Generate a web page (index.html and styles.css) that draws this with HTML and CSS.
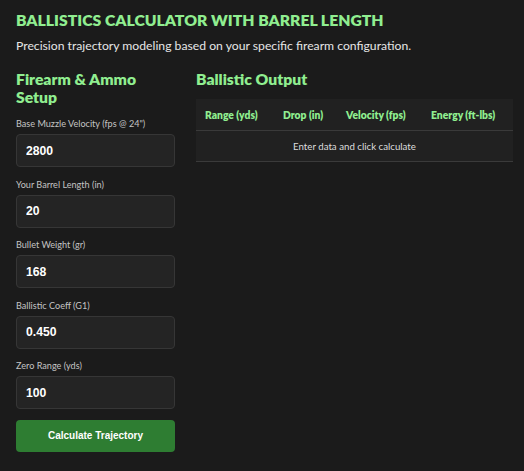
FILE: index.html
```html
<!DOCTYPE html>
<html lang="en">
<head>
<meta charset="UTF-8">
<title>Ballistics Calculator</title>
<link rel="stylesheet" href="styles.css">
</head>
<body>
<h1>BALLISTICS CALCULATOR WITH BARREL LENGTH</h1>
<p class="intro">Precision trajectory modeling based on your specific firearm configuration.</p>
<div class="layout">
<div class="setup">
<h2>Firearm &amp; Ammo Setup</h2>
<form id="calcForm">
<div class="field">
<label for="mv">Base Muzzle Velocity (fps @ 24")</label>
<input type="number" id="mv" value="2800">
</div>
<div class="field">
<label for="barrel">Your Barrel Length (in)</label>
<input type="number" id="barrel" value="20">
</div>
<div class="field">
<label for="weight">Bullet Weight (gr)</label>
<input type="number" id="weight" value="168">
</div>
<div class="field">
<label for="bc">Ballistic Coeff (G1)</label>
<input type="number" id="bc" value="0.450" step="0.001">
</div>
<div class="field">
<label for="zero">Zero Range (yds)</label>
<input type="number" id="zero" value="100">
</div>
<button type="submit">Calculate Trajectory</button>
</form>
</div>
<div class="output">
<h2>Ballistic Output</h2>
<table>
<thead>
<tr>
<th class="c1">Range (yds)</th>
<th class="c2">Drop (in)</th>
<th class="c3">Velocity (fps)</th>
<th class="c4">Energy (ft-lbs)</th>
</tr>
</thead>
<tbody id="results">
<tr><td colspan="4" class="empty">Enter data and click calculate</td></tr>
</tbody>
</table>
</div>
</div>
</body>
</html>
```
FILE: styles.css
```css
body {
  margin: 0;
  padding: 9px 11px 16px 16px;
  background-color: #1b1b1b;
  color: #e0e0e0;
  font-family: Lato, "Noto Sans", sans-serif;
}
h1 {
  margin: 0;
  font-size: 15.75px;
  font-weight: 800;
  line-height: 22px;
  color: #90ee90;
}
.intro {
  margin: 6px 0 0;
  font-size: 12.2px;
  line-height: 18px;
  color: #e6e6e6;
}
.layout {
  display: grid;
  grid-template-columns: 159px 1fr;
  gap: 21px;
  margin-top: 15px;
}
h2 {
  margin: 0;
  font-size: 15.7px;
  font-weight: 800;
  line-height: 18px;
  color: #90ee90;
}
.setup h2 {
  margin-bottom: 11px;
}
.output h2 {
  margin-bottom: 11px;
}
.field {
  margin-bottom: 10.5px;
}
label {
  display: block;
  font-size: 9.1px;
  line-height: 14px;
  color: #c4c4c4;
  margin-bottom: 3px;
}
input {
  box-sizing: border-box;
  width: 100%;
  height: 33px;
  padding: 0 9px;
  background-color: #242424;
  border: 1px solid #363636;
  border-radius: 4px;
  color: #ffffff;
  font-family: "Liberation Sans", Arial, sans-serif;
  font-weight: bold;
  font-size: 12.2px;
  -moz-appearance: textfield;
}
input::-webkit-outer-spin-button,
input::-webkit-inner-spin-button {
  -webkit-appearance: none;
  margin: 0;
}
button {
  display: block;
  width: 100%;
  height: 32px;
  margin-top: 2px;
  background-color: #2e7d32;
  border: none;
  border-radius: 4px;
  color: #ffffff;
  font-family: "Liberation Sans", Arial, sans-serif;
  font-weight: bold;
  font-size: 10px;
  cursor: pointer;
}
table {
  width: 100%;
  border-collapse: collapse;
  background-color: #212121;
  font-size: 10.3px;
}
th {
  height: 31px;
  padding: 0 0 0 9px;
  text-align: left;
  font-weight: 800;
  color: #90ee90;
  border-bottom: 1px solid #3a3a3a;
}
.c1 { width: 69px; }
.c2 { width: 54px; }
.c3 { width: 76px; }
td {
  height: 30px;
  padding: 0;
  border-bottom: 1px solid #3a3a3a;
}
.empty {
  text-align: center;
  font-size: 9.7px;
  color: #dddddd;
}
```
